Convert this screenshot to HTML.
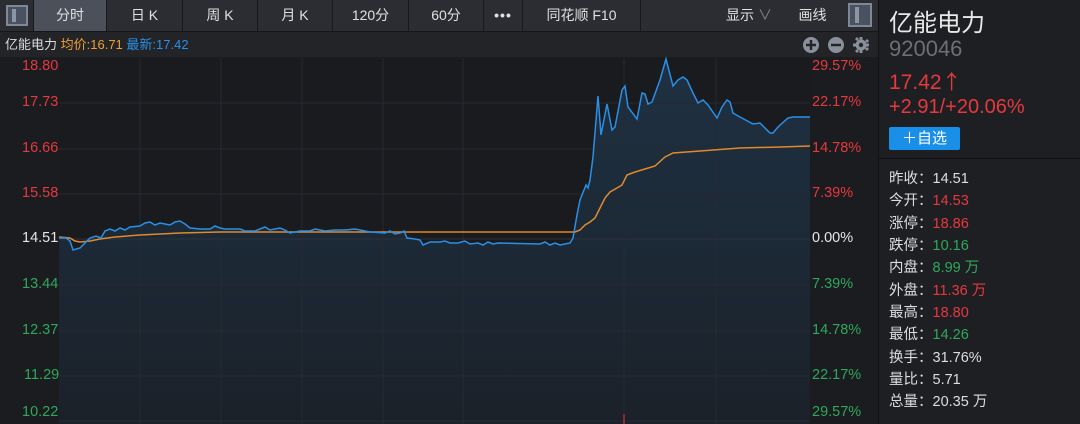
<!DOCTYPE html>
<html><head><meta charset="utf-8"><style>
*{margin:0;padding:0;box-sizing:border-box}
body{width:1080px;height:424px;background:#1b1c20;font-family:"Liberation Sans","Noto Sans CJK SC",sans-serif;overflow:hidden;position:relative;color:#ddd}
.tb{position:absolute;left:0;top:0;width:878px;height:32px;background:#2b2d32;border-bottom:1px solid #15161a}
.t{position:absolute;top:0;height:31px;line-height:31px;text-align:center;font-size:14px;color:#e0e0e0;border-right:1px solid #18191d}
.hd{position:absolute;left:0;top:32px;width:878px;height:25px;background:#222428;font-size:13px;line-height:25px}
.rp{position:absolute;left:878px;top:0;width:202px;height:424px;background:#1e1f23;border-left:1px solid #111}
.s{position:absolute;left:10px;font-size:14.5px;color:#ddd}
.r{color:#e5393e}.g{color:#2ea85a}
.ax{position:absolute;font-size:14.5px}
</style></head><body>
<div class="tb">
 <div class="t" style="left:0;width:34px"><div style="position:absolute;left:6px;top:5px;width:22px;height:21px;border:2px solid #7e8896;background:#4a5260"><div style="position:absolute;left:4px;top:2px;width:4px;height:13px;background:#8a96a6"></div></div></div>
 <div class="t" style="left:34px;width:73px;background:#4b505a">分时</div>
 <div class="t" style="left:107px;width:76px">日 K</div>
 <div class="t" style="left:183px;width:75px">周 K</div>
 <div class="t" style="left:258px;width:75px">月 K</div>
 <div class="t" style="left:333px;width:76px">120分</div>
 <div class="t" style="left:409px;width:75px">60分</div>
 <div class="t" style="left:484px;width:39px;font-weight:bold;letter-spacing:1px">•••</div>
 <div class="t" style="left:523px;width:118px">同花顺 F10</div>
 <div class="t" style="left:714px;width:70px;border:none">显示 <span style="color:#888">∨</span></div>
 <div class="t" style="left:785px;width:55px;border:none">画线</div>
 <div style="position:absolute;left:848px;top:3px;width:24px;height:24px;border:2px solid #7e8896;background:#4a5260"><div style="position:absolute;left:5px;top:2px;width:4px;height:16px;background:#8a96a6"></div></div>
</div>
<div class="hd"><span style="margin-left:5px;color:#ddd">亿能电力</span> <span style="color:#f0a030">均价:16.71</span> <span style="color:#2a8fe6">最新:17.42</span>
<svg style="position:absolute;left:800px;top:4px" width="70" height="18"><g fill="#8a909b"><circle cx="11" cy="9" r="8"/><circle cx="36" cy="9" r="8"/></g><g stroke="#222428" stroke-width="2.4"><path d="M6 9H16M11 4V14M31 9H41"/></g><g fill="#8a909b"><circle cx="61" cy="9" r="5.5"/><path d="M59.5 1h3v3h-3zM59.5 14h3v3h-3zM53 7.5h3v3h-3zM66 7.5h3v3h-3zM55 3l2-2 2 2-2 2zM65 13l2-2 2 2-2 2zM55 15l2-2 2 2-2 2zM65 5l2-2 2 2-2 2z"/></g><circle cx="61" cy="9" r="2.2" fill="#222428"/></svg></div>
<svg style="position:absolute;left:0;top:0" width="878" height="424">
<defs><linearGradient id="g2" x1="0" y1="0" x2="0" y2="1"><stop offset="0" stop-color="#1f3549"/><stop offset="1" stop-color="#1b222b"/></linearGradient></defs>
<rect x="59" y="58" width="751" height="366" fill="#1a1b1f"/>
<path d="M59 238L66 238L70 241L73 250L80 248L85 243L90 238L96 236L101 238L105 231L110 229L115 231L120 228L125 230L130 227L140 226L145 223L150 222L155 225L160 223L170 225L175 222L180 221L185 224L190 228L200 229L210 229L215 226L220 228L225 229L240 229L245 231L255 231L265 227L270 230L280 228L285 230L290 233L300 231L310 231L315 229L325 231L335 230L345 230L355 229L370 232L385 233L390 231L395 234L400 233L404 231L407 238L415 239L420 240L423 245L430 242L440 242L445 241L450 243L458 243L465 241L470 244L478 243L483 245L488 242L493 244L498 243L540 244L545 242L550 245L555 243L560 245L565 244L570 243L573 238L577 215L580 200L584 190L586 185L588 188L590 180L593 157L598 96L601 135L607 104L612 130L615 127L622 90L625 86L628 107L637 119L642 93L645 94L648 104L652 102L660 80L666 59L673 86L678 80L683 77L687 80L693 93L698 103L703 100L708 105L717 118L722 107L727 100L730 102L733 113L740 117L753 124L760 123L770 133L773 133L778 127L788 118L793 117L810 117L810 424L59 424Z" fill="url(#g2)" opacity="0.85"/>
<g stroke="#262a31" stroke-width="1">
<path d="M59 103H810M59 149H810M59 194H810M59 285H810M59 331H810M59 376H810M59 421H810"/>
<path d="M140 58V424M221 58V424M302 58V424M383 58V424M463 58V424M624 58V424M716 58V424"/>
</g>
<path d="M59 239H810" stroke="#2c313a"/>
<path d="M624 414V424" stroke="#e5393e"/>
<path d="M59 237L70 238L75 241L80 242L90 241L100 239L115 237L140 235L180 233L220 232L300 232L400 232L450 232L500 232L575 232L580 230L585 225L590 222L595 218L600 208L605 198L610 192L617 188L622 185L627 175L635 172L645 169L655 166L665 157L673 153L700 151L740 148L780 147L810 146" fill="none" stroke="#e08a2e" stroke-width="1.5"/>
<path d="M59 238L66 238L70 241L73 250L80 248L85 243L90 238L96 236L101 238L105 231L110 229L115 231L120 228L125 230L130 227L140 226L145 223L150 222L155 225L160 223L170 225L175 222L180 221L185 224L190 228L200 229L210 229L215 226L220 228L225 229L240 229L245 231L255 231L265 227L270 230L280 228L285 230L290 233L300 231L310 231L315 229L325 231L335 230L345 230L355 229L370 232L385 233L390 231L395 234L400 233L404 231L407 238L415 239L420 240L423 245L430 242L440 242L445 241L450 243L458 243L465 241L470 244L478 243L483 245L488 242L493 244L498 243L540 244L545 242L550 245L555 243L560 245L565 244L570 243L573 238L577 215L580 200L584 190L586 185L588 188L590 180L593 157L598 96L601 135L607 104L612 130L615 127L622 90L625 86L628 107L637 119L642 93L645 94L648 104L652 102L660 80L666 59L673 86L678 80L683 77L687 80L693 93L698 103L703 100L708 105L717 118L722 107L727 100L730 102L733 113L740 117L753 124L760 123L770 133L773 133L778 127L788 118L793 117L810 117" fill="none" stroke="#2a8fe6" stroke-width="1.5"/>
</svg>
<div class="ax r" style="left:22px;top:58px">18.80</div>
<div class="ax r" style="left:22px;top:94px">17.73</div>
<div class="ax r" style="left:22px;top:140px">16.66</div>
<div class="ax r" style="left:22px;top:185px">15.58</div>
<div class="ax" style="left:22px;top:230px;color:#e6e6e6">14.51</div>
<div class="ax g" style="left:22px;top:276px">13.44</div>
<div class="ax g" style="left:22px;top:322px">12.37</div>
<div class="ax g" style="left:24px;top:367px">11.29</div>
<div class="ax g" style="left:22px;top:404px">10.22</div>
<div class="ax r" style="left:812px;top:58px">29.57%</div>
<div class="ax r" style="left:812px;top:94px">22.17%</div>
<div class="ax r" style="left:812px;top:140px">14.78%</div>
<div class="ax r" style="left:812px;top:185px">7.39%</div>
<div class="ax" style="left:812px;top:230px;color:#e6e6e6">0.00%</div>
<div class="ax g" style="left:812px;top:276px">7.39%</div>
<div class="ax g" style="left:812px;top:322px">14.78%</div>
<div class="ax g" style="left:812px;top:367px">22.17%</div>
<div class="ax g" style="left:812px;top:404px">29.57%</div>
<div class="rp">
 <div style="position:absolute;left:10px;top:3px;font-size:24px;color:#e8e8e8">亿能电力</div>
 <div style="position:absolute;left:10px;top:36px;font-size:22px;color:#6c6f75">920046</div>
 <div class="r" style="position:absolute;left:10px;top:66px;font-size:21px">17.42<span style="font-family:'Noto Sans CJK SC',sans-serif;font-size:20px">↑</span></div>
 <div class="r" style="position:absolute;left:10px;top:96px;font-size:20px">+2.91/+20.06%</div>
 <div style="position:absolute;left:10px;top:127px;width:71px;height:23px;background:#1a8fe8;border-radius:2px;color:#fff;font-size:15px;line-height:23px;text-align:center">＋自选</div>
 <div style="position:absolute;left:0;top:158px;width:202px;height:1px;background:#111"></div>
 <div class="s" style="top:167px">昨收：14.51</div>
 <div class="s" style="top:189px">今开：<span class="r">14.53</span></div>
 <div class="s" style="top:212px">涨停：<span class="r">18.86</span></div>
 <div class="s" style="top:234px">跌停：<span class="g">10.16</span></div>
 <div class="s" style="top:256px">内盘：<span class="g">8.99 万</span></div>
 <div class="s" style="top:279px">外盘：<span class="r">11.36 万</span></div>
 <div class="s" style="top:301px">最高：<span class="r">18.80</span></div>
 <div class="s" style="top:323px">最低：<span class="g">14.26</span></div>
 <div class="s" style="top:346px">换手：31.76%</div>
 <div class="s" style="top:368px">量比：5.71</div>
 <div class="s" style="top:390px">总量：20.35 万</div>
</div>
</body></html>
